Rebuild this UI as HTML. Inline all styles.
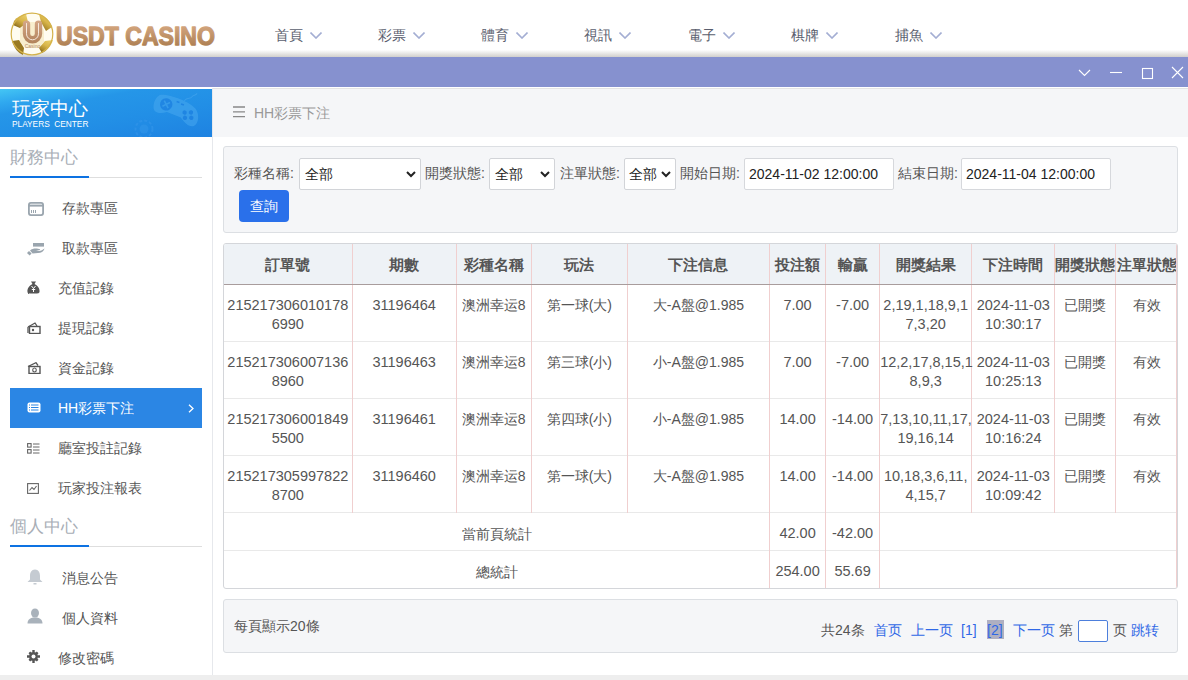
<!DOCTYPE html>
<html><head><meta charset="utf-8">
<style>
*{box-sizing:border-box;margin:0;padding:0}
html,body{width:1188px;height:680px;overflow:hidden;background:#fff;font-family:"Liberation Sans",sans-serif;font-size:14px;color:#555}
.abs{position:absolute}
#hdr{left:0;top:0;width:1188px;height:57px;background:#fff}
#hdrshadow{left:0;top:50px;width:1188px;height:7px;background:linear-gradient(#fefefe,#d0cfcc)}
.nav{top:26px;font-size:14px;color:#5a5e6e;line-height:18px;white-space:nowrap}
.nav svg{position:absolute;left:35px;top:6px}
#bar{left:0;top:57px;width:1188px;height:30px;background:#8691cf}
#barline{left:0;top:86px;width:1188px;height:1px;background:#7e89c6}
#sb{left:0;top:88px;width:213px;height:587px;background:#fff;border-right:1px solid #e6e8ec}
#sbh{left:0;top:89px;width:212px;height:48px;overflow:hidden;background:linear-gradient(170deg,#44c6f4 0%,#30a9ef 16%,#2596e8 30%,#228fe6 60%,#1e82e1 100%)}
.sect{left:10px;font-size:17px;color:#a8aeb6;line-height:20px}
.uline{left:10px;width:192px;height:1px;background:#dedede}
.ublue{left:10px;width:79px;height:2px;background:#0d72e2}
.item{left:0;width:212px;height:40px;font-size:14px;color:#555;line-height:40px}
.item .t{position:absolute;top:0}
.item svg{position:absolute}
#act{left:10px;top:388px;width:192px;height:40px;background:#2b86e4}
#main{left:213px;top:88px;width:975px;height:49px;background:#f5f6f8;border-top:1px solid #e4e4e4}
#foot{left:0;top:675px;width:1188px;height:5px;background:#eeeeee}
.panel{background:#f5f6f8;border:1px solid #dcdfe3;border-radius:3px}
.lbl{top:164px;font-size:14px;color:#555;line-height:18px;white-space:nowrap}
.sel{top:158px;height:32px;background:#fff;border:1px solid #d2d4d8;border-radius:2px;font-size:14px;color:#222;line-height:30px;padding-left:5px}
.sel svg{position:absolute;right:4.5px;top:12px}
.inp{top:158px;height:32px;background:#fff;border:1px solid #d6d8dc;border-radius:2px;font-size:14px;color:#222;line-height:30px;padding-left:4px;white-space:nowrap}
#btn{left:239px;top:190px;width:50px;height:32px;background:#2a70ea;border-radius:4px;color:#fff;font-size:14px;line-height:32px;text-align:center}
table{border-collapse:collapse;table-layout:fixed;font-size:14px;color:#555}
.n{font-size:14.5px}
#tbl{left:223px;top:243px;width:955px;height:346px;border:1px solid #d4d6da;border-radius:3px;overflow:hidden}
td,th{border-left:1px solid #f0cfcf;text-align:center;vertical-align:top;white-space:nowrap;overflow:visible}
td:first-child,th:first-child{border-left:none}
th{background:#eef2f6;height:40px;font-weight:bold;color:#555;font-size:15px;line-height:38px;border-bottom:1px solid #a89c9c;padding:2px 0 0 0}
td{border-top:1px solid #e9e9e9;line-height:19px;padding-top:11px}
tr.r td{height:57px}
tr.s td{height:38px;padding-top:12px}
tr.s td.n{padding-top:11px}
#pg{left:223px;top:599px;width:955px;height:54px}
.lnk{color:#3068e6}
</style></head><body>
<!-- header -->
<div id="hdr" class="abs"></div>
<div id="hdrshadow" class="abs"></div>
<svg class="abs" style="left:0;top:0" width="230" height="57" viewBox="0 0 230 57">
 <defs>
  <linearGradient id="gold" x1="0.8" y1="0" x2="0.2" y2="1">
   <stop offset="0" stop-color="#e9cf6a"/><stop offset="0.45" stop-color="#d9b64a"/><stop offset="0.8" stop-color="#a8862a"/><stop offset="1" stop-color="#6d5514"/>
  </linearGradient>
  <linearGradient id="ubrown" gradientUnits="userSpaceOnUse" x1="0" y1="20" x2="0" y2="44"><stop offset="0" stop-color="#d6a888"/><stop offset="1" stop-color="#b0825a"/></linearGradient>
  <linearGradient id="brown" x1="0" y1="0" x2="0" y2="1">
   <stop offset="0" stop-color="#dcae88"/><stop offset="1" stop-color="#a6784a"/>
  </linearGradient>
 </defs>
 <circle cx="32" cy="34" r="21" fill="#fffcf0"/>
 <g fill="url(#gold)">
  <path d="M39,14 C45,16 50,21 52,27 L46,31 L41,22 Z"/>
  <path d="M14,21 C17,17 21,15 26,14 L28,22 L20,28 L13,25 Z"/>
  <path d="M53,40 C51,46 47,51 42,53 L39,48 L45,41 Z"/>
  <path d="M12,41 L19,40 L24,48 L23,55 C18,53 14,48 12,41 Z" fill="#9a7a22"/>
  <path d="M20,28 L28,22 L38,22 L44,30 L44,42 L38,48 L26,48 L20,42 Z" fill="#f3e4b8" opacity="0.6"/>
 </g>
 <circle cx="32" cy="34" r="20.8" fill="none" stroke="#d4b24a" stroke-width="1.2"/>
 <path d="M26.5,24.3 v9.5 a6,6 0 0 0 12,0 v-9.5" fill="none" stroke="url(#ubrown)" stroke-width="7.4" stroke-linecap="round"/>
 <path d="M26.5,23.5 v10.3 a6,6 0 0 0 12,0 v-10.3" fill="none" stroke="#f6e8dc" stroke-width="1" stroke-linecap="round"/>
 <text x="32.5" y="48.3" font-size="5" fill="#b58a68" text-anchor="middle" font-family="Liberation Sans">Casino</text>
 <text x="56" y="44.5" font-family="Liberation Sans" font-weight="bold" font-size="26.5" fill="url(#brown)" stroke="url(#brown)" stroke-width="1.3" stroke-linejoin="round" textLength="159" lengthAdjust="spacingAndGlyphs">USDT CASINO</text>
</svg>
<div class="abs nav" style="left:275px">首頁<svg width="12" height="7" viewBox="0 0 12 7"><path d="M0.5,0.5 L6,6 L11.5,0.5" fill="none" stroke="#a4aed3" stroke-width="1.6"/></svg></div>
<div class="abs nav" style="left:378px">彩票<svg width="12" height="7" viewBox="0 0 12 7"><path d="M0.5,0.5 L6,6 L11.5,0.5" fill="none" stroke="#a4aed3" stroke-width="1.6"/></svg></div>
<div class="abs nav" style="left:481px">體育<svg width="12" height="7" viewBox="0 0 12 7"><path d="M0.5,0.5 L6,6 L11.5,0.5" fill="none" stroke="#a4aed3" stroke-width="1.6"/></svg></div>
<div class="abs nav" style="left:584px">視訊<svg width="12" height="7" viewBox="0 0 12 7"><path d="M0.5,0.5 L6,6 L11.5,0.5" fill="none" stroke="#a4aed3" stroke-width="1.6"/></svg></div>
<div class="abs nav" style="left:688px">電子<svg width="12" height="7" viewBox="0 0 12 7"><path d="M0.5,0.5 L6,6 L11.5,0.5" fill="none" stroke="#a4aed3" stroke-width="1.6"/></svg></div>
<div class="abs nav" style="left:791px">棋牌<svg width="12" height="7" viewBox="0 0 12 7"><path d="M0.5,0.5 L6,6 L11.5,0.5" fill="none" stroke="#a4aed3" stroke-width="1.6"/></svg></div>
<div class="abs nav" style="left:895px">捕魚<svg width="12" height="7" viewBox="0 0 12 7"><path d="M0.5,0.5 L6,6 L11.5,0.5" fill="none" stroke="#a4aed3" stroke-width="1.6"/></svg></div>

<!-- purple bar -->
<div id="bar" class="abs"></div>
<svg class="abs" style="left:1070px;top:57px" width="118" height="30" viewBox="0 0 118 30">
 <path d="M9,13 L14.5,18.5 L20,13" fill="none" stroke="#fff" stroke-width="1.1"/>
 <path d="M40,15.5 H52" stroke="#fff" stroke-width="1.1"/>
 <rect x="72.5" y="11.5" width="10" height="10" fill="none" stroke="#fff" stroke-width="1.1"/>
 <path d="M102,10 L113,21 M113,10 L102,21" stroke="#fff" stroke-width="1.1"/>
</svg>

<!-- sidebar -->
<div id="sb" class="abs"></div>
<div id="sbh" class="abs">
 <svg class="abs" style="left:0;top:0" width="212" height="48" viewBox="0 0 212 48">
  <g transform="translate(177,21) rotate(18)" opacity="0.7">
   <path d="M-21,-9 C-14,-13 10,-12 17,-7 C23,-3 25,6 21,10 C17,13 11,10 6,6 L-9,5 C-15,9 -21,10 -23,5 C-25,0 -24,-6 -21,-9 Z" fill="#4aa9f0" opacity="0.75"/>
   <circle cx="-12" cy="-2" r="6.2" fill="#1f82e2"/>
   <path d="M-15,-5 L-9,1 M-9,-5 L-15,1" stroke="#3d9eec" stroke-width="1.6"/>
   <path d="M-3,-8 h3 M2,-7 h3" stroke="#1f82e2" stroke-width="1.6"/>
   <circle cx="8" cy="0" r="2.2" fill="#1f82e2"/><circle cx="14" cy="-2" r="2.2" fill="#1f82e2"/>
   <circle cx="10" cy="5" r="2.2" fill="#1f82e2"/><circle cx="16" cy="3" r="2.2" fill="#1f82e2"/>
   <path d="M4,-11 C6,-16 9,-14 10,-17 C11,-20 13,-19 14,-22" fill="none" stroke="#4aa9f0" stroke-width="1" opacity="0.8"/>
  </g>
  <circle cx="144" cy="40" r="8.5" fill="none" stroke="#3a9aea" stroke-width="2" stroke-dasharray="3 2" opacity="0.45"/>
  <circle cx="144" cy="40" r="4.5" fill="#3a9aea" opacity="0.4"/>
 </svg>
 <div class="abs" style="left:12px;top:9px;font-size:19px;color:#fff;line-height:22px;white-space:nowrap">玩家中心</div>
 <div class="abs" style="left:12px;top:30px;font-size:8.3px;color:#fff;line-height:10px;white-space:nowrap">PLAYERS&nbsp; CENTER</div>
</div>

<div class="abs sect" style="top:148px">財務中心</div>
<div class="abs uline" style="top:177px"></div>
<div class="abs ublue" style="top:176px"></div>

<div class="abs item" style="top:188px"><svg style="left:28px;top:14px" width="16" height="14" viewBox="0 0 16 14"><rect x="0.9" y="0.9" width="14.2" height="12.2" rx="2" fill="none" stroke="#9aa5ae" stroke-width="1.8"/><rect x="1" y="2.6" width="14" height="2" fill="#9aa5ae"/><rect x="3" y="8" width="1" height="3" fill="#9aa5ae"/><rect x="5" y="8" width="1" height="3" fill="#9aa5ae"/><rect x="7" y="8" width="1" height="3" fill="#9aa5ae"/></svg><span class="t" style="left:62px">存款專區</span></div>
<div class="abs item" style="top:228px"><svg style="left:27px;top:15px" width="18" height="13" viewBox="0 0 18 13"><rect x="6" y="0" width="11" height="3.6" fill="#9aa5ae"/><path d="M0,10 L2,8 L4.6,10.6 L2.6,12.6 Z" fill="#9aa5ae"/><path d="M3,7.6 C5,5.8 8,5.3 11,5.8 L13.2,6.3 C13,7.4 11,7.6 9,7.8 L12,8 C14,7.8 16,6.5 17.6,5.4 C16.6,8.4 14,9.9 11,10 L5.6,10.4 Z" fill="#9aa5ae"/></svg><span class="t" style="left:62px">取款專區</span></div>
<div class="abs item" style="top:268px"><svg style="left:27px;top:13px" width="13" height="13" viewBox="0 0 13 13"><path d="M4,0.5 h5 l-1.5,2.5 C11,4.5 13,8 12.5,11 C12,12.5 11,12.5 6.5,12.5 C2,12.5 0.5,12.5 0.5,11 C0,8 2,4.5 5.5,3 Z" fill="#555"/><path d="M4.5,5 L6.5,7.5 L8.5,5 M6.5,7.5 v3.5 M4.8,8.5 h3.4" stroke="#fff" stroke-width="1" fill="none"/></svg><span class="t" style="left:58px">充值記錄</span></div>
<div class="abs item" style="top:308px"><svg style="left:27px;top:14px" width="14" height="12" viewBox="0 0 14 12"><path d="M1,5 L8,1 L10,4" fill="none" stroke="#555" stroke-width="1.3"/><rect x="2.5" y="4.5" width="10.5" height="7" fill="none" stroke="#555" stroke-width="1.4"/><path d="M1,5 v6" stroke="#555" stroke-width="1.3"/><circle cx="6" cy="8" r="1.2" fill="#555"/></svg><span class="t" style="left:58px">提現記錄</span></div>
<div class="abs item" style="top:348px"><svg style="left:27px;top:14px" width="14" height="12" viewBox="0 0 14 12"><path d="M1,4.5 L9,0.7 L11,3.5" fill="none" stroke="#555" stroke-width="1.3"/><rect x="2" y="4.5" width="11" height="7" fill="none" stroke="#555" stroke-width="1.4"/><ellipse cx="7.5" cy="8" rx="1.8" ry="2" fill="none" stroke="#555" stroke-width="1.1"/></svg><span class="t" style="left:58px">資金記錄</span></div>
<div id="act" class="abs"></div>
<div class="abs item" style="top:388px;color:#fff"><svg style="left:27px;top:14px" width="14" height="11" viewBox="0 0 14 11"><rect x="0.5" y="0.5" width="13" height="10" rx="2" fill="#fff"/><path d="M4,3 h7.5 M4,5.5 h7.5 M4,8 h7.5" stroke="#2b86e4" stroke-width="1.1"/><path d="M2,3 h1 M2,5.5 h1 M2,8 h1" stroke="#2b86e4" stroke-width="1"/></svg><span class="t" style="left:58px">HH彩票下注</span><svg style="left:188px;top:16px" width="7" height="9" viewBox="0 0 7 9"><path d="M1,0.7 L5,4.5 L1,8.3" fill="none" stroke="#fff" stroke-width="1.3"/></svg></div>
<div class="abs item" style="top:428px"><svg style="left:27px;top:15px" width="13" height="11" viewBox="0 0 13 11"><rect x="0.6" y="0.6" width="3.5" height="3.5" fill="none" stroke="#666" stroke-width="1.1"/><rect x="0.6" y="6.6" width="3.5" height="3.5" fill="none" stroke="#666" stroke-width="1.1"/><path d="M6,1 h6.5 M6,4 h6.5 M6,7 h6.5 M6,10 h6.5" stroke="#666" stroke-width="1"/></svg><span class="t" style="left:58px">廳室投註記錄</span></div>
<div class="abs item" style="top:468px"><svg style="left:27px;top:15px" width="12" height="11" viewBox="0 0 12 11"><rect x="0.6" y="0.6" width="10.8" height="9.8" fill="none" stroke="#666" stroke-width="1.1"/><path d="M2.5,7.5 L5,4.5 L7,6.5 L9.5,3" fill="none" stroke="#666" stroke-width="1.1"/></svg><span class="t" style="left:58px">玩家投注報表</span></div>

<div class="abs sect" style="top:517px">個人中心</div>
<div class="abs uline" style="top:546px"></div>
<div class="abs ublue" style="top:545px"></div>

<div class="abs item" style="top:557.5px"><svg style="left:27px;top:11px" width="16" height="16" viewBox="0 0 16 16"><path d="M8,0.5 C11.5,0.5 13,3.5 13,7 L13,10.5 L15.5,13 L0.5,13 L3,10.5 L3,7 C3,3.5 4.5,0.5 8,0.5 Z" fill="#c5cbd2"/><rect x="6.5" y="14" width="3" height="1.5" fill="#c5cbd2"/></svg><span class="t" style="left:62px">消息公告</span></div>
<div class="abs item" style="top:597.5px"><svg style="left:27px;top:10.5px" width="16" height="16" viewBox="0 0 16 16"><ellipse cx="8" cy="5" rx="4" ry="4.5" fill="#a9b2bb"/><path d="M0.5,15.5 C0.5,11 4,10 6,9.5 L10,9.5 C12,10 15.5,11 15.5,15.5 Z" fill="#a9b2bb"/></svg><span class="t" style="left:62px">個人資料</span></div>
<div class="abs item" style="top:637.5px"><svg style="left:27px;top:12.5px" width="13" height="13" viewBox="0 0 13 13"><g fill="#555"><circle cx="6.5" cy="6.5" r="4.5"/><path d="M5.3,0 h2.4 v2.5 h-2.4z M5.3,10.5 h2.4 v2.5 h-2.4z M0,5.3 v2.4 h2.5 v-2.4z M10.5,5.3 v2.4 h2.5 v-2.4z"/><path d="M1.5,3.2 l1.7,-1.7 l1.8,1.8 l-1.7,1.7z M8,9.7 l1.7,-1.7 l1.8,1.8 l-1.7,1.7z M1.5,9.8 l1.7,1.7 l1.8,-1.8 l-1.7,-1.7z M8,3.3 l1.7,1.7 l1.8,-1.8 l-1.7,-1.7z"/></g><circle cx="6.5" cy="6.5" r="2" fill="#fff"/></svg><span class="t" style="left:58px">修改密碼</span></div>

<div id="foot" class="abs"></div>

<!-- main -->
<div id="main" class="abs"></div>
<svg class="abs" style="left:233px;top:106px" width="12" height="12" viewBox="0 0 12 12"><path d="M0,1 h12 M0,5.8 h12 M0,10.6 h12" stroke="#888" stroke-width="1.3"/></svg>
<div class="abs" style="left:254px;top:104px;font-size:14px;color:#999;line-height:18px">HH彩票下注</div>

<div class="abs panel" style="left:223px;top:146px;width:955px;height:87px"></div>
<div class="abs lbl" style="left:234px">彩種名稱:</div>
<div class="abs sel" style="left:299px;width:122px">全部<svg width="10" height="7" viewBox="0 0 10 7"><path d="M1,1 L5,5 L9,1" fill="none" stroke="#222" stroke-width="2"/></svg></div>
<div class="abs lbl" style="left:425px">開獎狀態:</div>
<div class="abs sel" style="left:489px;width:66px">全部<svg width="10" height="7" viewBox="0 0 10 7"><path d="M1,1 L5,5 L9,1" fill="none" stroke="#222" stroke-width="2"/></svg></div>
<div class="abs lbl" style="left:560px">注單狀態:</div>
<div class="abs sel" style="left:624px;width:52px;padding-left:4px">全部<svg width="10" height="7" viewBox="0 0 10 7" style="right:4px"><path d="M1,1 L5,5 L9,1" fill="none" stroke="#222" stroke-width="2"/></svg></div>
<div class="abs lbl" style="left:680px">開始日期:</div>
<div class="abs inp" style="left:744px;width:150px">2024-11-02 12:00:00</div>
<div class="abs lbl" style="left:898px">結束日期:</div>
<div class="abs inp" style="left:961px;width:150px">2024-11-04 12:00:00</div>
<div id="btn" class="abs">查詢</div>

<div id="tbl" class="abs">
<table style="width:953px">
<colgroup><col style="width:128px"><col style="width:104px"><col style="width:75px"><col style="width:96px"><col style="width:142px"><col style="width:56px"><col style="width:54px"><col style="width:92px"><col style="width:83px"><col style="width:61px"><col style="width:61px"></colgroup>
<tr><th>訂單號</th><th>期數</th><th>彩種名稱</th><th>玩法</th><th>下注信息</th><th>投注額</th><th>輸贏</th><th>開獎結果</th><th>下注時間</th><th>開獎狀態</th><th>注單狀態</th></tr>
<tr class="r"><td class="n">215217306010178<br>6990</td><td class="n">31196464</td><td>澳洲幸运8</td><td>第一球(大)</td><td>大-A盤@1.985</td><td class="n">7.00</td><td class="n">-7.00</td><td class="n">2,19,1,18,9,1<br>7,3,20</td><td class="n">2024-11-03<br>10:30:17</td><td>已開獎</td><td>有效</td></tr>
<tr class="r"><td class="n">215217306007136<br>8960</td><td class="n">31196463</td><td>澳洲幸运8</td><td>第三球(小)</td><td>小-A盤@1.985</td><td class="n">7.00</td><td class="n">-7.00</td><td class="n">12,2,17,8,15,1<br>8,9,3</td><td class="n">2024-11-03<br>10:25:13</td><td>已開獎</td><td>有效</td></tr>
<tr class="r"><td class="n">215217306001849<br>5500</td><td class="n">31196461</td><td>澳洲幸运8</td><td>第四球(小)</td><td>小-A盤@1.985</td><td class="n">14.00</td><td class="n">-14.00</td><td class="n">7,13,10,11,17,<br>19,16,14</td><td class="n">2024-11-03<br>10:16:24</td><td>已開獎</td><td>有效</td></tr>
<tr class="r"><td class="n">215217305997822<br>8700</td><td class="n">31196460</td><td>澳洲幸运8</td><td>第一球(大)</td><td>大-A盤@1.985</td><td class="n">14.00</td><td class="n">-14.00</td><td class="n">10,18,3,6,11,<br>4,15,7</td><td class="n">2024-11-03<br>10:09:42</td><td>已開獎</td><td>有效</td></tr>
<tr class="s"><td colspan="5">當前頁統計</td><td class="n">42.00</td><td class="n">-42.00</td><td colspan="4"></td></tr>
<tr class="s"><td colspan="5">總統計</td><td class="n">254.00</td><td class="n">55.69</td><td colspan="4"></td></tr>
</table>
<div class="abs" style="left:952px;top:0;width:1px;height:344px;background:#f0cfcf"></div>
</div>

<div id="pg" class="abs panel"></div>
<div class="abs" style="left:234px;top:617px;font-size:14px;color:#555;line-height:18px">每頁顯示20條</div>
<div class="abs" style="left:821px;top:621px;font-size:14px;line-height:18px;white-space:nowrap;color:#555">共24条</div>
<div class="abs lnk" style="left:874px;top:621px;line-height:18px;white-space:nowrap">首页</div>
<div class="abs lnk" style="left:911px;top:621px;line-height:18px;white-space:nowrap">上一页</div>
<div class="abs lnk" style="left:961px;top:621px;line-height:18px;white-space:nowrap">[1]</div>
<div class="abs" style="left:987px;top:620px;width:17px;height:19px;background:#afafc1"></div>
<div class="abs lnk" style="left:987px;top:621px;line-height:18px;white-space:nowrap">[2]</div>
<div class="abs lnk" style="left:1013px;top:621px;line-height:18px;white-space:nowrap">下一页</div>
<div class="abs" style="left:1059px;top:621px;line-height:18px;white-space:nowrap;color:#555">第</div>
<div class="abs" style="left:1078px;top:620px;width:30px;height:22px;border:1px solid #4d7fdc;border-radius:2px;background:#fff"></div>
<div class="abs" style="left:1113px;top:621px;line-height:18px;white-space:nowrap;color:#555">页</div>
<div class="abs lnk" style="left:1131px;top:621px;line-height:18px;white-space:nowrap">跳转</div>
</body></html>
